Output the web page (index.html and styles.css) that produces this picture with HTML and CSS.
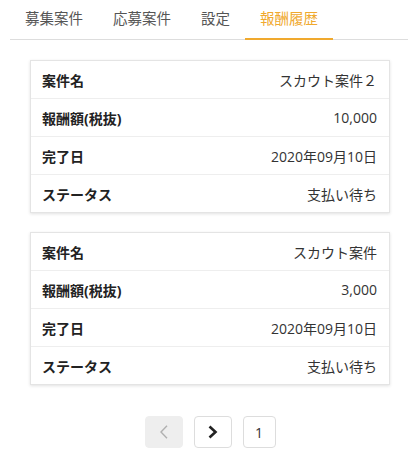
FILE: index.html
```html
<!DOCTYPE html>
<html lang="ja">
<head>
    <meta charset="UTF-8">
    <meta name="viewport" content="width=device-width, initial-scale=1.0">
    <title>報酬履歴</title>
    <link rel="stylesheet" href="styles.css">
</head>
<body>
    <div class="tabs">
        <div class="tab">募集案件</div>
        <div class="tab">応募案件</div>
        <div class="tab">設定</div>
        <div class="tab active">報酬履歴</div>
    </div>
    <div class="main">
        <div class="card">
            <div class="row"><span class="label">案件名</span><span class="value">スカウト案件２</span></div>
            <div class="row"><span class="label">報酬額(税抜)</span><span class="value">10,000</span></div>
            <div class="row"><span class="label">完了日</span><span class="value">2020年09月10日</span></div>
            <div class="row"><span class="label">ステータス</span><span class="value">支払い待ち</span></div>
        </div>
        <div class="card">
            <div class="row"><span class="label">案件名</span><span class="value">スカウト案件</span></div>
            <div class="row"><span class="label">報酬額(税抜)</span><span class="value">3,000</span></div>
            <div class="row"><span class="label">完了日</span><span class="value">2020年09月10日</span></div>
            <div class="row"><span class="label">ステータス</span><span class="value">支払い待ち</span></div>
        </div>
        <div class="pager">
            <div class="btn disabled">
                <svg width="14" height="14" viewBox="0 0 14 14"><path d="M10 0.8L4 7L10 13.2" fill="none" stroke="#b0b0b0" stroke-width="1.4"/></svg>
            </div>
            <div class="btn">
                <svg width="14" height="14" viewBox="0 0 14 14"><path d="M3.5 1.5L9.5 7L3.5 12.5" fill="none" stroke="#222" stroke-width="2.6"/></svg>
            </div>
            <div class="btn page">1</div>
        </div>
    </div>
</body>
</html>
```

FILE: styles.css
```css
* {
    margin: 0;
    padding: 0;
    box-sizing: border-box;
}
body {
    font-family: "Open Sans", "Noto Sans CJK JP", sans-serif;
    font-size: 14px;
    color: #333;
    background: #fff;
}
.tabs {
    display: flex;
    margin-left: 10px;
    border-bottom: 1px solid #ddd;
}
.tab {
    padding: 10px 15px;
    font-size: 14.5px;
    line-height: 18px;
    color: #555;
    border-bottom: 2px solid transparent;
    margin-bottom: -1px;
}
.tab.active {
    color: #f0a92e;
    border-bottom-color: #f0a92e;
}
.main {
    padding: 20px 18px 0 30px;
}
.card {
    border: 1px solid #e4e4e4;
    box-shadow: 0 1px 3px rgba(0, 0, 0, 0.12);
    margin-bottom: 19px;
}
.row {
    display: flex;
    justify-content: space-between;
    align-items: center;
    height: 38px;
    padding: 0 12px 0 11px;
    border-bottom: 1px solid #eee;
}
.row:last-child {
    height: 37px;
    border-bottom: none;
}
.label {
    font-weight: bold;
    color: #222;
}
.value {
    color: #333;
}
.pager {
    display: flex;
    justify-content: center;
    gap: 11px;
    margin-top: 31px;
}
.btn {
    width: 38px;
    height: 32px;
    border: 1px solid #ddd;
    border-radius: 4px;
    display: flex;
    align-items: center;
    justify-content: center;
    background: #fff;
}
.btn.disabled {
    background: #eee;
    border-color: #eee;
}
.btn.page {
    width: 33px;
    font-size: 14px;
    color: #333;
}
```
